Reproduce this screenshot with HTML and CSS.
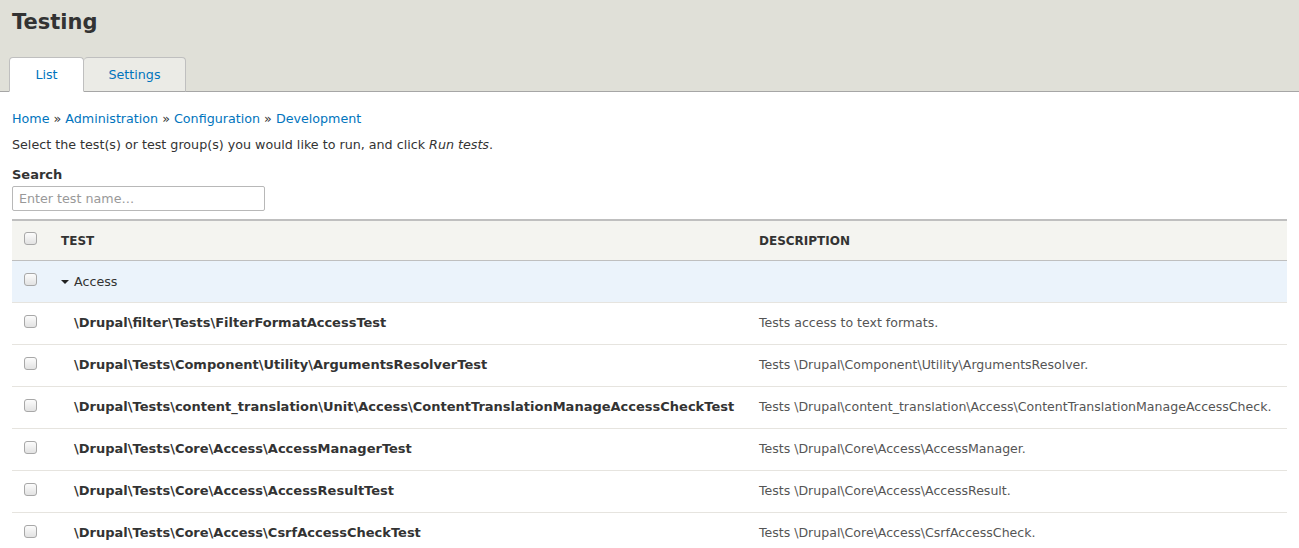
FILE: index.html
```html
<!DOCTYPE html>
<html>
<head>
<meta charset="utf-8">
<title>Testing</title>
<link rel="stylesheet" href="styles.css">
</head>
<body>
<header class="page-head">
  <h1 class="page-title">Testing</h1>
  <nav class="tabs">
    <a class="tab active" href="#">List</a>
    <a class="tab" href="#">Settings</a>
  </nav>
</header>
<main class="content">
  <div class="breadcrumb"><a href="#">Home</a> » <a href="#">Administration</a> » <a href="#">Configuration</a> » <a href="#">Development</a></div>
  <p class="intro">Select the test(s) or test group(s) you would like to run, and click <em>Run tests</em>.</p>
  <label class="search-label">Search</label>
  <input class="search-input" type="text" placeholder="Enter test name…">
  <table class="tests">
    <thead>
      <tr><th class="cb"><span class="check"></span></th><th class="name-h">Test</th><th class="desc-h">Description</th></tr>
    </thead>
    <tbody>
      <tr class="group"><td class="cb"><span class="check"></span></td><td class="group-name"><span class="caret"></span>Access</td><td></td></tr>
      <tr><td class="cb"><span class="check"></span></td><td class="tname">\Drupal\filter\Tests\FilterFormatAccessTest</td><td class="desc">Tests access to text formats.</td></tr>
      <tr><td class="cb"><span class="check"></span></td><td class="tname">\Drupal\Tests\Component\Utility\ArgumentsResolverTest</td><td class="desc">Tests \Drupal\Component\Utility\ArgumentsResolver.</td></tr>
      <tr><td class="cb"><span class="check"></span></td><td class="tname">\Drupal\Tests\content_translation\Unit\Access\ContentTranslationManageAccessCheckTest</td><td class="desc">Tests \Drupal\content_translation\Access\ContentTranslationManageAccessCheck.</td></tr>
      <tr><td class="cb"><span class="check"></span></td><td class="tname">\Drupal\Tests\Core\Access\AccessManagerTest</td><td class="desc">Tests \Drupal\Core\Access\AccessManager.</td></tr>
      <tr><td class="cb"><span class="check"></span></td><td class="tname">\Drupal\Tests\Core\Access\AccessResultTest</td><td class="desc">Tests \Drupal\Core\Access\AccessResult.</td></tr>
      <tr><td class="cb"><span class="check"></span></td><td class="tname">\Drupal\Tests\Core\Access\CsrfAccessCheckTest</td><td class="desc">Tests \Drupal\Core\Access\CsrfAccessCheck.</td></tr>
    </tbody>
  </table>
</main>
</body>
</html>
```
FILE: styles.css
```css
html, body {
  margin: 0;
  padding: 0;
  background: #fff;
  font-family: "DejaVu Sans", Verdana, sans-serif;
  font-size: 12.7px;
  color: #333;
  overflow: hidden;
}
.page-head {
  background: #e0e0d8;
  border-bottom: 1px solid #a6a6a6;
  padding: 0 12px 0 9px;
  height: 91px;
  display: flex;
  flex-direction: column;
  justify-content: space-between;
}
.page-title {
  margin: 9px 0 0 3px;
  font-size: 21px;
  font-weight: bold;
  color: #333;
  line-height: 26px;
}
.tabs {
  display: flex;
  margin-bottom: -1px;
}
.tab {
  display: block;
  height: 33px;
  line-height: 33px;
  text-decoration: none;
  color: #0074bd;
  font-size: 12.7px;
  text-align: center;
  border: 1px solid #bfbfbf;
  border-bottom-color: #a6a6a6;
  border-radius: 4px 4px 0 0;
  background: #ebebe6;
  box-sizing: content-box;
}
.tab.active {
  background: #fff;
  border-bottom-color: #fff;
  width: 73px;
}
.tab:not(.active) {
  width: 101px;
  border-left: none;
}
.content {
  padding: 0 12px;
}
.breadcrumb {
  margin-top: 18px;
  line-height: 17px;
  color: #333;
}
.breadcrumb a {
  color: #0074bd;
  text-decoration: none;
}
.intro {
  margin: 9px 0 0;
  line-height: 17px;
}
.search-label {
  display: block;
  font-weight: bold;
  font-size: 13px;
  margin-top: 13px;
  line-height: 17px;
}
.search-input {
  display: block;
  margin-top: 3px;
  width: 253px;
  height: 25px;
  box-sizing: border-box;
  border: 1px solid #b8b8b8;
  border-radius: 2px;
  padding: 0 6px;
  font-family: inherit;
  font-size: 12.7px;
  color: #333;
}
.search-input::placeholder {
  color: #999;
}
.tests {
  margin-top: 8px;
  width: 100%;
  border-collapse: collapse;
}
.tests th {
  background: #f4f4f0;
  border-top: 2px solid #bfbfbf;
  border-bottom: 1px solid #bfbfbf;
  height: 39px;
  text-align: left;
  text-transform: uppercase;
  font-size: 12px;
  font-weight: bold;
  color: #333;
  padding: 0;
}
.tests td {
  height: 42px;
  border-bottom: 1px solid #e6e4df;
  padding: 0;
  vertical-align: middle;
  box-sizing: border-box;
}
.tests .cb {
  width: 49px;
  padding-left: 12px;
  box-sizing: border-box;
}
.check {
  display: block;
  width: 11px;
  height: 11px;
  border: 1px solid #a8a8a8;
  border-radius: 3px;
  background: linear-gradient(#fcfcfc, #e2e2e2);
  margin-top: -5px;
}
.name-h {
  width: 698px;
}
.group td {
  background: #ebf3fb;
}
.group-name {
  color: #333;
}
.caret {
  display: inline-block;
  width: 0;
  height: 0;
  border-left: 4px solid transparent;
  border-right: 4px solid transparent;
  border-top: 4px solid #222;
  margin: 0 5px 2px 0;
  vertical-align: middle;
}
.tname {
  font-weight: bold;
  font-size: 13px;
  padding-left: 13px !important;
  padding-bottom: 2px !important;
  white-space: nowrap;
}
.desc {
  font-size: 12.55px;
  color: #555;
  white-space: nowrap;
  padding-bottom: 2px !important;
}
```
